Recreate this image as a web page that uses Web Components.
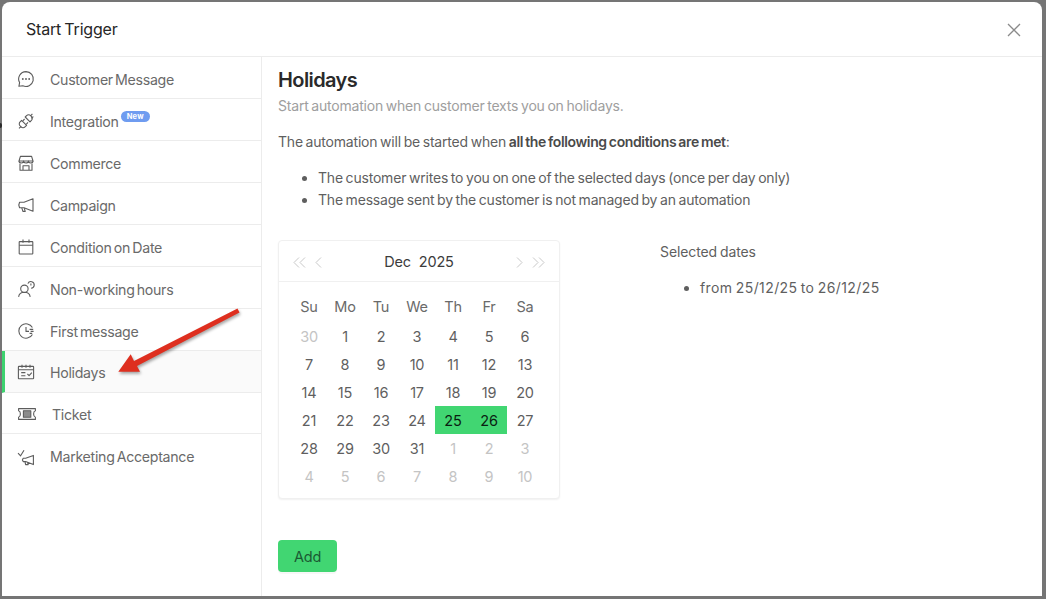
<!DOCTYPE html>
<html lang="en"><head><meta charset="utf-8"><title>Start Trigger</title>
<style>
html,body{margin:0;height:100%}
body{background:#757575;font-family:Inter,"Liberation Sans",sans-serif;overflow:hidden}
</style></head><body>
<edge-speck></edge-speck>
<trigger-modal heading="Start Trigger">
  <trigger-nav slot="nav">
    <nav-row label="Customer Message" icon="chat"></nav-row>
    <nav-row label="Integration" icon="plug" badge="New"></nav-row>
    <nav-row label="Commerce" icon="store"></nav-row>
    <nav-row label="Campaign" icon="mega"></nav-row>
    <nav-row label="Condition on Date" icon="cal"></nav-row>
    <nav-row label="Non-working hours" icon="user"></nav-row>
    <nav-row label="First message" icon="clock"></nav-row>
    <nav-row label="Holidays" icon="holiday" active></nav-row>
    <nav-row label="Ticket" icon="ticket" wide></nav-row>
    <nav-row label="Marketing Acceptance" icon="accept"></nav-row>
  </trigger-nav>
  <holiday-panel></holiday-panel>
  <red-arrow slot="overlay"></red-arrow>
</trigger-modal>
<script>
const ICONS={
chat:'<path d="M9 1.6a7.4 7.4 0 1 1-3.2 14.1L1.9 16.3l.7-3.7A7.4 7.4 0 0 1 9 1.6z"/><circle cx="5.8" cy="9" r=".4"/><circle cx="9" cy="9" r=".4"/><circle cx="12.2" cy="9" r=".4"/>',
plug:'<path d="M2 16.4l2.2-2M15.4 1.8l-2 2.2M16.4 4.6l-2.2 1.6"/><path d="M4.6 8.4l5 5-1.6 1.5a2.8 2.8 0 0 1-4-.1l-.9-.9a2.8 2.8 0 0 1 0-4z"/><path d="M8.2 5l4.8 4.8 1.4-1.4a2.8 2.8 0 0 0 0-4l-.8-.8a2.8 2.8 0 0 0-4 0z"/><path d="M7.6 7l-1.8 1.9M11 10.4l-1.8 1.9"/>',
store:'<path d="M3.4 2.4h11.2l1.4 4.6H2z"/><path d="M2 7c0 2.6 4.6 2.6 4.6 0 0 2.6 4.8 2.6 4.8 0 0 2.6 4.6 2.6 4.6 0"/><path d="M3 9.4v6.8h12V9.4M6 16.2v-4.4h6v4.4"/>',
mega:'<path d="M16 2.8v12.4L7 11.8H2.6L1.8 9l.8-2.8H7z"/><path d="M4.8 11.8l1.1 3.6h2.3l-.9-3.2"/>',
cal:'<rect x="2.2" y="3.6" width="13.6" height="12.4" rx=".6"/><path d="M2.2 7.2h13.6M6 1.6v3.2M12 1.6v3.2"/>',
user:'<circle cx="7.4" cy="8.8" r="3.7"/><path d="M1.6 16.8c.5-3.4 2.8-4.6 5.8-4.6s5.3 1.2 5.8 4.6"/><path d="M10.9 3.6a3.3 3.3 0 1 1 3.2 4.6"/><path d="M13.9 3.4v2.2"/>',
clock:'<path d="M15.4 5.6A7.2 7.2 0 1 0 15.4 12.4"/><path d="M9 5v4.4h3"/><path d="M12.6 7.4h3.6M13.6 9.4h3M12.6 11.4h2.6"/>',
holiday:'<rect x="1.4" y="3.4" width="15.2" height="12.4" rx=".6"/><path d="M1.4 6.8h15.2M5 1.8v3M9 1.8v3M13 1.8v3M4.2 9.6h4.2M4.2 12.8h4.2M10.4 11l1.7 1.7 2.7-3.1"/>',
ticket:'<path d="M.6 3.6h16.8v2.2c-1.4.4-1.8 1.6-1.8 3.2s.4 2.8 1.8 3.2v2.2H.6v-2.2c1.4-.4 1.8-1.6 1.8-3.2S2 6.2.6 5.8z"/><path d="M5.4 5.8h7.4v6.4H5.4z" fill="#8c8c8c"/>',
accept:'<path d="M16.4 7.4v9.2L8.6 13.6H6.2l-.8-1.7.8-1.7h2.4zM8 13.6l.6 3h2.6l-.6-2"/><path d="M1 5.2l2.6 2.6L7 2.2"/>'
};
class EdgeSpeck extends HTMLElement{
 connectedCallback(){
  this.attachShadow({mode:'open'}).innerHTML=`<style>:host{position:absolute;left:0;top:123px;width:2px;height:5px;border-radius:0 2px 2px 0;background:#2a2a2a}</style>`;
 }
}
class TriggerModal extends HTMLElement{
 connectedCallback(){
  this.attachShadow({mode:'open'}).innerHTML=`<style>
  :host{display:block;position:relative;box-sizing:border-box;width:1040px;height:594px;margin:2px 0 0 2px;background:#fff;border-radius:8px 8px 0 0;overflow:hidden;color:#262626}
  header{height:55px;box-sizing:border-box;border-bottom:1px solid #ececec;display:flex;align-items:center;justify-content:space-between;padding:0 21px 1px 24px;font-size:16px;letter-spacing:-.2px;word-spacing:-1px}
  .body{display:flex;height:539px}
  svg{display:block;margin-top:2px}
  </style>
  <header><span>${this.getAttribute('heading')}</span>
  <svg width="14" height="14" viewBox="0 0 14 14" fill="none" stroke="#8a8a8a" stroke-width="1.3"><path d="M1 1l12 12M13 1L1 13"/></svg></header>
  <div class="body"><slot name="nav"></slot><slot></slot></div><slot name="overlay"></slot>`;
 }
}
class TriggerNav extends HTMLElement{
 connectedCallback(){
  this.attachShadow({mode:'open'}).innerHTML=`<style>:host{display:block;box-sizing:border-box;width:260px;flex:none;border-right:1px solid #ececec}</style><slot></slot>`;
 }
}
class NavRow extends HTMLElement{
 connectedCallback(){
  const a=this.hasAttribute('active'),w=this.hasAttribute('wide'),b=this.getAttribute('badge');
  this.attachShadow({mode:'open'}).innerHTML=`<style>
  :host{display:flex;align-items:center;box-sizing:border-box;height:${w?41:42}px;border-bottom:1px solid #ececec;padding:${a?1:w?2:3}px 0 0 ${a?12:w?16:15}px;font-size:14.2px;letter-spacing:-.3px;word-spacing:-1.5px;color:#6a6a6a;background:${a?'#fafafa':'transparent'};${a?'border-left:3px solid #3dd26f;':''}}
  :host(:last-child){border-bottom:0}
  svg{flex:none;width:18px;height:18px;fill:none;stroke:#5c5c5c;stroke-width:1.1;stroke-linejoin:round;margin-right:${w?16:15}px;overflow:visible}
  .new{align-self:flex-start;margin:9px 0 0 2px;height:11px;line-height:11px;padding:0 6px;border-radius:6px;background:#6f9cf0;color:#fff;font-size:7.5px;font-weight:700;letter-spacing:.2px}
  </style><svg viewBox="0 0 18 18">${ICONS[this.getAttribute('icon')]}</svg><span>${this.getAttribute('label')}</span>${b?`<span class="new">${b}</span>`:''}`;
 }
}
class MonthCalendar extends HTMLElement{
 connectedCallback(){
  const head=['Su','Mo','Tu','We','Th','Fr','Sa'];
  const days=[[30,1]];
  for(let d=1;d<=31;d++)days.push([d,d==25||d==26?2:0]);
  for(let d=1;d<=10;d++)days.push([d,1]);
  this.attachShadow({mode:'open'}).innerHTML=`<style>
  :host{display:block;box-sizing:border-box;width:282px;height:259px;border:1px solid #f0f0f0;border-radius:4px;box-shadow:0 1px 2px rgba(0,0,0,.06);background:#fff;flex:none}
  .top{height:41px;box-sizing:border-box;border-bottom:1px solid #f0f0f0;display:flex;align-items:center;padding:0 14px;color:#c2c2c2}
  .title{flex:1;text-align:center;font-size:14.5px;color:#3c3c3c;word-spacing:4px;padding-top:1px}
  .arrows{display:flex;gap:9px;align-items:center;margin-top:3px}
  svg{display:block;fill:none;stroke:#c8c8c8;stroke-width:1}
  .grid{display:grid;grid-template-columns:repeat(7,36px);grid-template-rows:29px;grid-auto-rows:28px;padding:11px 12px 0 12px;text-align:center;font-size:14.5px;color:#5f5f5f}
  .grid>*{line-height:30px;height:28px}
  .grid>.h{line-height:28px;color:#6a6a6a}
  .off{color:#c4c4c4}
  .sel{background:#41d672;color:#0a1f12}
  </style>
  <div class="top"><span class="arrows"><svg width="13" height="11" viewBox="0 0 13 11"><path d="M6 .5L1 5.5l5 5M12 .5l-5 5 5 5"/></svg><svg width="7" height="11" viewBox="0 0 7 11"><path d="M6 .5L1 5.5l5 5"/></svg></span>
  <span class="title">Dec 2025</span>
  <span class="arrows"><svg width="7" height="11" viewBox="0 0 7 11"><path d="M1 .5l5 5-5 5"/></svg><svg width="13" height="11" viewBox="0 0 13 11"><path d="M1 .5l5 5-5 5M7 .5l5 5-5 5"/></svg></span></div>
  <div class="grid">${head.map(h=>`<div class="h">${h}</div>`).join('')}${days.map(([d,s])=>`<div class="${s==1?'off':s==2?'sel':''}">${d}</div>`).join('')}</div>`;
 }
}
class GreenButton extends HTMLElement{
 connectedCallback(){
  this.attachShadow({mode:'open'}).innerHTML=`<style>:host{display:inline-flex;align-items:center;justify-content:center;box-sizing:border-box;width:59px;height:32px;border-radius:4px;background:#41d672;color:#1b5a33;font-size:14.5px;box-shadow:0 2px 0 rgba(0,0,0,.03)}</style><slot></slot>`;
 }
}
class HolidayPanel extends HTMLElement{
 connectedCallback(){
  this.attachShadow({mode:'open'}).innerHTML=`<style>
  :host{display:block;flex:1;padding:10px 0 0 16px;font-size:14px;letter-spacing:-.2px;word-spacing:-1px;color:#5f5f5f}
  h2{margin:0;font-size:20px;line-height:26px;font-weight:600;color:#2a2a2a;letter-spacing:-.6px}
  .sub{margin:2px 0 0;line-height:22px;color:#9e9e9e}
  .lead{margin:14px 0 0;line-height:22px}
  b{font-weight:600;color:#4a4a4a;letter-spacing:-.37px}
  ul{margin:0;padding:0 0 0 40px}
  li{line-height:22px}
  .c1{margin-top:14px}
  .row{display:flex;margin-top:29px}
  .sel{margin-left:100px;padding-top:1px}
  .sel p{margin:0;line-height:22px;letter-spacing:-.1px}
  .sel ul{margin-top:14px}
  .sel li{letter-spacing:.4px}
  .act{margin-top:41px}
  </style>
  <h2>Holidays</h2>
  <p class="sub">Start automation when customer texts you on holidays.</p>
  <p class="lead">The automation will be started when <b>all the following conditions are met</b>:</p>
  <ul class="c1"><li>The customer writes to you on one of the selected days (once per day only)</li><li>The message sent by the customer is not managed by an automation</li></ul>
  <div class="row"><month-calendar></month-calendar><div class="sel"><p>Selected dates</p><ul><li>from 25/12/25 to 26/12/25</li></ul></div></div>
  <div class="act"><green-button>Add</green-button></div>`;
 }
}
class RedArrow extends HTMLElement{
 connectedCallback(){
  this.attachShadow({mode:'open'}).innerHTML=`<style>:host{position:absolute;left:110px;top:300px;width:135px;height:85px;pointer-events:none}svg{display:block;overflow:visible;filter:drop-shadow(1px 2px 1.5px rgba(0,0,0,.35))}</style>
  <svg width="135" height="85" viewBox="112 302 135 85"><path d="M237.5 308.5L239.5 312.5 137 366 140 371.7 118.3 371.7 130.7 354.3 134 361z" fill="#de2f1f"/></svg>`;
 }
}
customElements.define('edge-speck',EdgeSpeck);
customElements.define('trigger-modal',TriggerModal);
customElements.define('trigger-nav',TriggerNav);
customElements.define('nav-row',NavRow);
customElements.define('month-calendar',MonthCalendar);
customElements.define('green-button',GreenButton);
customElements.define('holiday-panel',HolidayPanel);
customElements.define('red-arrow',RedArrow);
</script>
</body></html>
